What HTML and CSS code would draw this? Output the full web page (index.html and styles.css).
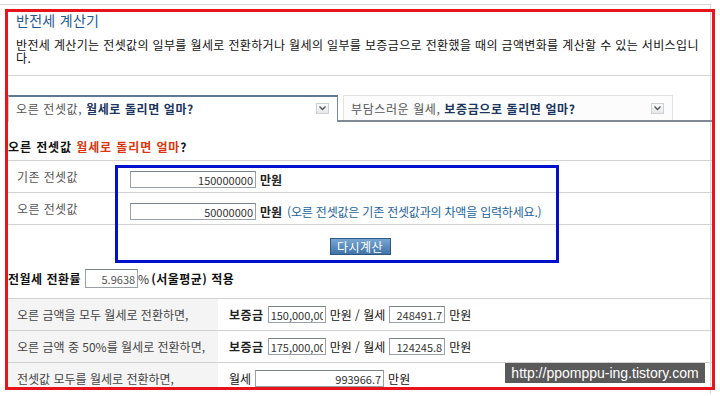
FILE: index.html
```html
<!DOCTYPE html>
<html lang="ko">

<head>
    <meta charset="UTF-8">
    <meta name="viewport" content="width=device-width, initial-scale=1.0">
    <title>반전세 계산기</title>
    <link rel="stylesheet" href="styles.css">
</head>

<body>
    <div class="frame">
        <div class="calc">
            <div class="head">
                <h1 class="title">반전세 계산기</h1>
                <p class="desc">반전세 계산기는 전셋값의 일부를 월세로 전환하거나 월세의 일부를 보증금으로 전환했을 때의 금액변화를 계산할 수 있는 서비스입니다.</p>
            </div>

            <div class="tabs">
                <div class="tab on">오른 전셋값,&nbsp;<b>월세로 돌리면 얼마?</b>
                    <span class="dd"><svg width="7" height="5" viewBox="0 0 7 5"><path d="M0.5 0.5 L3.5 3.5 L6.5 0.5" fill="none" stroke="#555" stroke-width="1.4"/></svg></span>
                </div>
                <div class="tab off">부담스러운 월세,&nbsp;<b>보증금으로 돌리면 얼마?</b>
                    <span class="dd"><svg width="7" height="5" viewBox="0 0 7 5"><path d="M0.5 0.5 L3.5 3.5 L6.5 0.5" fill="none" stroke="#555" stroke-width="1.4"/></svg></span>
                </div>
            </div>

            <h2 class="sub">오른 전셋값 <em>월세로 돌리면 얼마</em>?</h2>

            <div class="inputs">
                <div class="row">
                    <div class="label">기존 전셋값</div>
                    <div class="value"><input class="num wide" type="text" value="150000000"> <span class="unit strong">만원</span></div>
                </div>
                <div class="row">
                    <div class="label">오른 전셋값</div>
                    <div class="value"><input class="num wide" type="text" value="50000000"> <span class="unit strong">만원</span> <span class="note">(오른 전셋값은 기존 전셋값과의 차액을 입력하세요.)</span></div>
                </div>
                <div class="row btnrow">
                    <button class="btn" type="button">다시계산</button>
                </div>
            </div>

            <div class="rate">
                <b>전월세 전환률</b> <input class="num ratein" type="text" value="5.9638"><span class="pct">%</span> <b>(서울평균) 적용</b>
            </div>

            <div class="result">
                <div class="row">
                    <div class="label">오른 금액을 모두 월세로 전환하면,</div>
                    <div class="value"><b>보증금</b> <input class="short" type="text" value="150,000,000"> <span class="unit">만원 / 월세</span> <input class="num mid" type="text" value="248491.7"> <span class="unit">만원</span></div>
                </div>
                <div class="row">
                    <div class="label">오른 금액 중 50%를 월세로 전환하면,</div>
                    <div class="value"><b>보증금</b> <input class="short" type="text" value="175,000,000"> <span class="unit">만원 / 월세</span> <input class="num mid" type="text" value="124245.8"> <span class="unit">만원</span></div>
                </div>
                <div class="row">
                    <div class="label">전셋값 모두를 월세로 전환하면,</div>
                    <div class="value"><span class="unit">월세</span> <input class="num long" type="text" value="993966.7"> <span class="unit">만원</span></div>
                </div>
            </div>

            <div class="mark"></div>
            <div class="stamp">http://ppomppu-ing.tistory.com</div>
        </div>
    </div>
</body>

</html>
```

FILE: styles.css
```css
* {
    box-sizing: border-box;
}

body {
    margin: 0;
    background: #fff;
    font-family: "Noto Sans CJK KR", "Liberation Sans", sans-serif;
    font-size: 12px;
    color: #222;
}

.frame {
    margin-top: 4px;
    width: 711px;
    height: 390px;
    border-top: 1px solid #d8d8d8;
    border-right: 1px solid #d8d8d8;
}

.calc {
    position: relative;
    margin: 4px 0 0 5px;
    width: 710px;
    height: 381px;
    border: 3px solid #e8141c;
    overflow: hidden;
}

.head {
    padding-bottom: 11px;
    border-bottom: 1px solid #d4d4d4;
}

.title {
    margin: 0;
    padding-left: 8px;
    font-size: 14px;
    font-weight: normal;
    line-height: 16px;
    color: #1f5a96;
    letter-spacing: 0.3px;
}

.desc {
    margin: 10px 0 0;
    padding: 0 8px;
    line-height: 13px;
    color: #111;
    letter-spacing: 0.36px;
}

/* tabs */
.tabs {
    display: flex;
    align-items: flex-end;
    margin-top: 19px;
    border-bottom: 2px solid #7f8a94;
}

.tab {
    display: flex;
    align-items: center;
    width: 330px;
    padding-left: 7px;
    color: #555;
    white-space: nowrap;
    letter-spacing: 0.6px;
}

.tab b {
    color: #1b3560;
    letter-spacing: 0.6px;
}

.tab.on {
    position: relative;
    height: 27px;
    margin-bottom: -2px;
    border: 1px solid #cfcfcf;
    border-top: 2px solid #5d7994;
    border-right: 1px solid #7f8a94;
    border-bottom: none;
    background: #fff;
    padding-bottom: 3px;
}

.tab.off {
    height: 25px;
    margin-left: 5px;
    border: 1px solid #e2e2e2;
    border-bottom: none;
    background: #fcfcfc;
}

.dd {
    display: flex;
    align-items: center;
    justify-content: center;
    width: 13px;
    height: 11px;
    margin-left: auto;
    margin-right: 8px;
    border: 1px solid #cdd1d5;
    background: linear-gradient(#fafafa, #e6e8ea);
}

.sub {
    margin: 17px 0 0;
    font-size: 12px;
    line-height: 16px;
    color: #111;
    letter-spacing: 0.9px;
}

.sub em {
    font-style: normal;
    color: #d9360f;
}

/* rows */
.inputs {
    margin-top: 5px;
    border-top: 1px solid #d2d2d2;
}

.row {
    display: flex;
    align-items: center;
    height: 32px;
    border-bottom: 1px solid #d2d2d2;
}

.inputs .label {
    width: 107px;
    padding-left: 9px;
    color: #555;
    letter-spacing: 0.4px;
}

.value {
    display: flex;
    align-items: center;
    gap: 4px;
    white-space: nowrap;
}

.inputs .value {
    padding-left: 15px;
    padding-top: 6px;
}

.unit {
    font-size: 12px;
    color: #111;
}

.strong {
    font-weight: bold;
    color: #222;
}

.note {
    color: #22639c;
    margin-left: 1px;
    letter-spacing: -0.2px;
}

input {
    height: 17px;
    padding: 0 2px;
    border: 1px solid #9aa1a8;
    border-top-color: #7b8288;
    font-family: "Noto Sans CJK KR", "Liberation Sans", sans-serif;
    font-size: 11px;
    color: #333;
    background: #fff;
}

.num {
    text-align: right;
}

.wide {
    width: 126px;
}

.btnrow {
    height: 41px;
    border-bottom: none;
    justify-content: center;
    padding-top: 1px;
}

.btn {
    width: 61px;
    height: 17px;
    padding: 0;
    border: 1px solid #2d5985;
    background: linear-gradient(#7ba7d3, #3f72a8);
    color: #fff;
    font-family: "Noto Sans CJK KR", sans-serif;
    font-size: 12px;
    line-height: 15px;
    letter-spacing: 0.5px;
}

.rate {
    display: flex;
    align-items: center;
    height: 32px;
    padding-bottom: 7px;
    color: #111;
}

.rate b {
    white-space: nowrap;
    letter-spacing: 0.5px;
}

.ratein {
    width: 53px;
    height: 19px;
    margin-left: 4px;
    color: #555;
}

.pct {
    margin-right: 2px;
    color: #333;
}

.result {
    border-top: 1px solid #d2d2d2;
}

.result .label {
    display: flex;
    align-items: center;
    align-self: stretch;
    width: 210px;
    padding-left: 9px;
    background: #f4f4f4;
    color: #444;
}

.result .value {
    padding-left: 11px;
}

.result b {
    color: #222;
    letter-spacing: 0.5px;
}

.short {
    width: 58px;
}

.mid {
    width: 56px;
}

.long {
    width: 129px;
}

/* annotation overlays */
.mark {
    position: absolute;
    left: 107px;
    top: 153px;
    width: 444px;
    height: 98px;
    border: 3px solid #0010cc;
}

.stamp {
    position: absolute;
    left: 497px;
    top: 351px;
    width: 200px;
    height: 20px;
    background: #5a5a5a;
    color: #fff;
    font-family: "Liberation Sans", sans-serif;
    font-size: 14px;
    line-height: 20px;
    text-align: center;
}
```
